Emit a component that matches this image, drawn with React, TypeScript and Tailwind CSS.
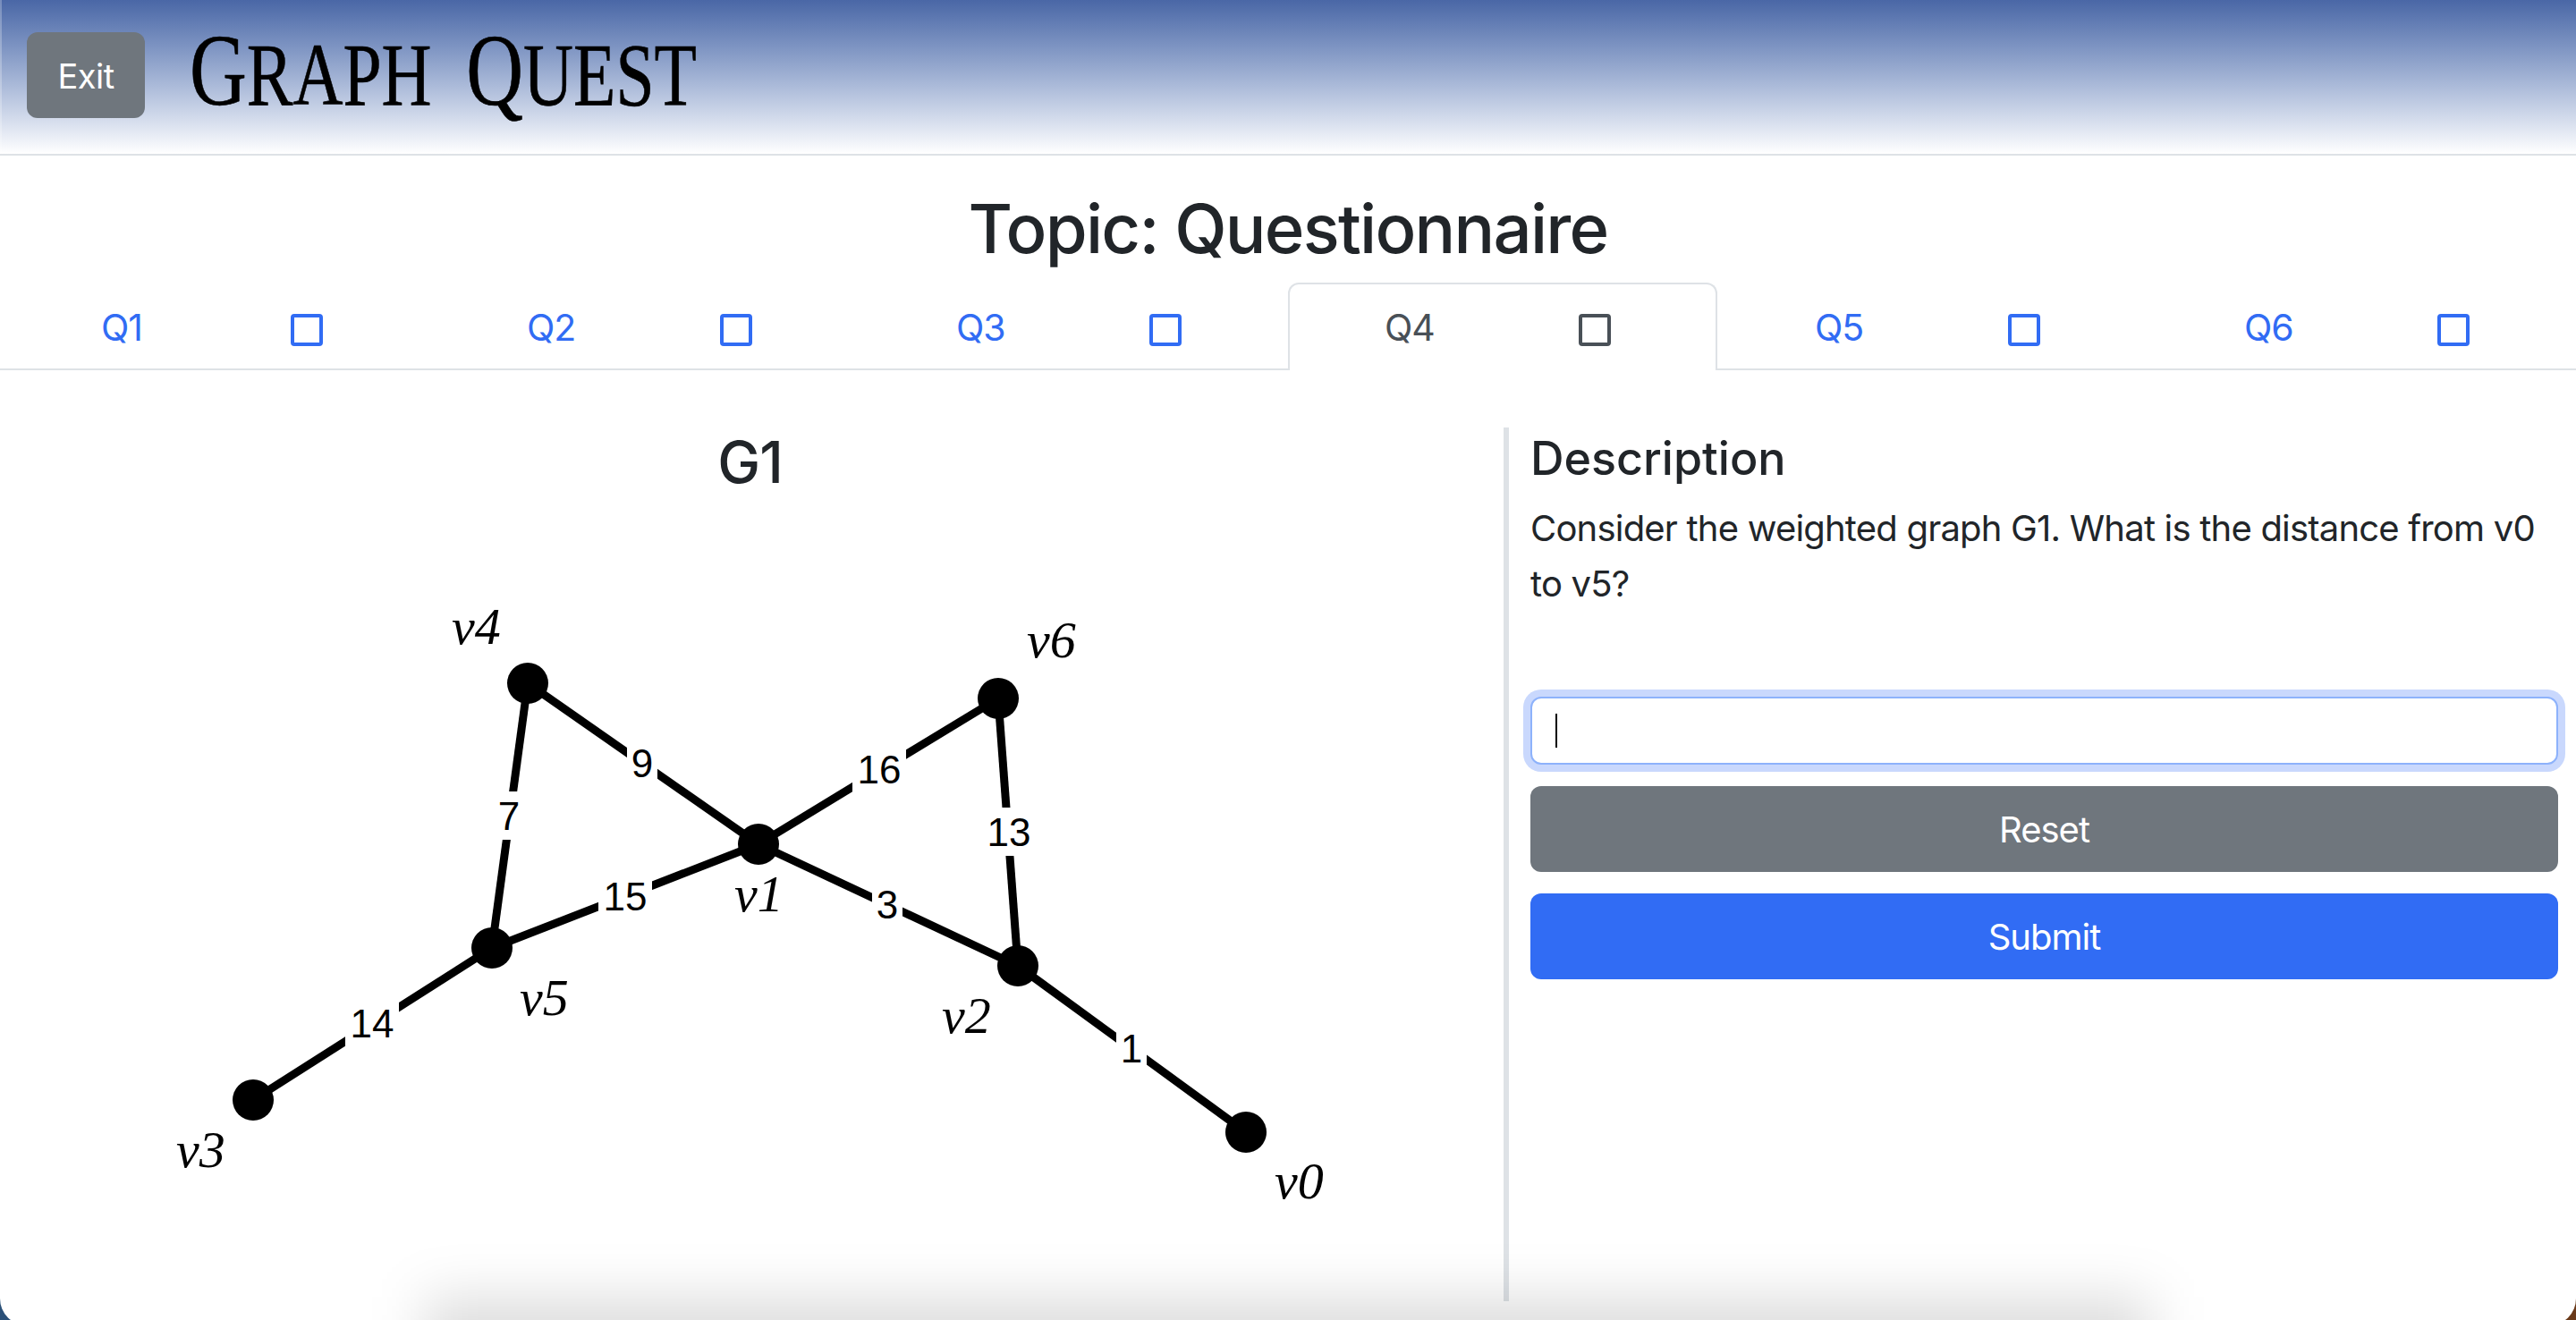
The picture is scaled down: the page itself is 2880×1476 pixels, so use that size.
const tabs = ['Q1', 'Q2', 'Q3', 'Q4', 'Q5', 'Q6']

const edges = [
  [590, 764, 848, 944],
  [590, 764, 550, 1060],
  [550, 1060, 848, 944],
  [550, 1060, 283, 1230],
  [848, 944, 1116, 781],
  [848, 944, 1138, 1080],
  [1116, 781, 1138, 1080],
  [1138, 1080, 1393, 1266],
]

const nodes = [
  [590, 764],
  [550, 1060],
  [283, 1230],
  [848, 944],
  [1116, 781],
  [1138, 1080],
  [1393, 1266],
]

const weights: [string, number, number][] = [
  ['9', 718, 853],
  ['7', 569, 912],
  ['15', 699, 1002],
  ['14', 416, 1144],
  ['16', 983, 860],
  ['13', 1128, 930],
  ['3', 992, 1011],
  ['1', 1265, 1172],
]

const names: [string, number, number][] = [
  ['v4', 505, 720],
  ['v5', 581, 1135],
  ['v3', 197, 1305],
  ['v1', 821, 1019],
  ['v6', 1148, 735],
  ['v2', 1053, 1155],
  ['v0', 1425, 1340],
]

function Graph() {
  return (
    <svg width="1680" height="800" viewBox="0 600 1680 800" className="block">
      {edges.map((e, i) => (
        <line key={i} x1={e[0]} y1={e[1]} x2={e[2]} y2={e[3]} stroke="#000" strokeWidth="9" />
      ))}
      {weights.map(([t, x, y]) => (
        <g key={t}>
          <rect x={x - (t.length > 1 ? 30 : 17)} y={y - 27} width={t.length > 1 ? 60 : 34} height="54" fill="#fff" />
          <text x={x} y={y + 16} textAnchor="middle" fontSize="44" fontFamily="'Liberation Sans', sans-serif" fill="#000">
            {t}
          </text>
        </g>
      ))}
      {nodes.map((n, i) => (
        <circle key={i} cx={n[0]} cy={n[1]} r="23" fill="#000" />
      ))}
      {names.map(([t, x, y]) => (
        <text key={t} x={x} y={y} fontSize="58" fontStyle="italic" fontFamily="'Liberation Serif', serif" fill="#000">
          {t}
        </text>
      ))}
    </svg>
  )
}

function tabLabelClass(t: string) {
  if (t === 'Q1') return 'ml-[113px] mt-[-8px] w-[212px] text-[41px] leading-[46px] tracking-[-1px]'
  if (t === 'Q4') return 'ml-[106px] mt-[-8px] w-[217px] text-[41px] leading-[46px] tracking-[-1px]'
  return 'ml-[109px] mt-[-8px] w-[216px] text-[41px] leading-[46px] tracking-[-1px]'
}

export default function App() {
  return (
    <div className="h-[1476px] overflow-hidden bg-[linear-gradient(to_right,#2b5078_50%,#6b3a1a_50%)]">
      <div className="relative h-[1482px] overflow-hidden rounded-b-[30px] bg-white font-['Inter',sans-serif] text-[40px] leading-[1.5] text-[#212529]">
        <header className="relative flex h-[174px] items-start border-b-2 border-[#dee2e6] bg-gradient-to-b from-[#4a67a6] to-white pl-[30px] pt-[36px]">
          <button className="h-[96px] w-[132px] rounded-[12px] bg-[#6f767d] pt-[2px] text-[38px] tracking-[-0.5px] text-white">Exit</button>
          <div className="ml-[50px] mt-[-22px] origin-left scale-x-[0.775] whitespace-pre font-['Liberation_Serif',serif] text-[100px] leading-[130px] text-black [-webkit-text-stroke:0.6px_#000]">
            <span className="text-[114px]">G</span>RAPH  <span className="text-[114px]">Q</span>UEST
          </div>
          <div className="absolute bottom-0 left-0 top-0 w-[2px] bg-white/25" />
        </header>

        <h1 className="mt-[36px] h-[90px] text-center text-[76px] leading-[90px] font-medium tracking-[-1.75px]">Topic: Questionnaire</h1>

        <nav className="mt-[16px] flex h-[98px] border-b-2 border-[#dee2e6]">
          {tabs.map((t) => {
            const active = t === 'Q4'
            return (
              <div
                key={t}
                className={
                  active
                    ? 'relative mb-[-2px] flex h-[98px] w-[480px] rounded-t-[12px] border-2 border-b-0 border-[#dee2e6] bg-white pt-[33px] text-[#495057]'
                    : 'flex h-[96px] w-[480px] pt-[35px] text-[#316cf4]'
                }
              >
                <span className={tabLabelClass(t)}>{t}</span>
                <span className={active ? 'h-[36px] w-[36px] rounded-[4px] border-[4px] border-[#495057]' : 'h-[36px] w-[36px] rounded-[4px] border-[4px] border-[#316cf4]'} />
              </div>
            )
          })}
        </nav>

        <main className="mt-[64px] flex h-[977px]">
          <section className="w-[1681px]">
            <h2 className="mt-[-3px] h-[125px] pr-[4px] text-center text-[64px] leading-[84px] font-medium tracking-[-1px]">G1</h2>
            <Graph />
          </section>
          <section className="h-[977px] w-[1199px] border-l-[6px] border-[#dee2e6] pl-[24px] pr-[20px]">
            <h3 className="mt-[4px] text-[52px] leading-[62px] font-medium">Description</h3>
            <p className="mt-[16px] h-[219px] leading-[62px] tracking-[-0.8px]">
              Consider the weighted graph G1. What is the distance from v0 to v5?
            </p>
            <div className="flex h-[76px] items-center rounded-[12px] border-2 border-[#8db2fb] bg-white pl-[26px] shadow-[0_0_0_8px_#c9d8fd]">
              <span className="h-[38px] w-[2px] bg-black" />
            </div>
            <button className="mt-[24px] h-[96px] w-full rounded-[12px] bg-[#6f767d] pt-[2px] tracking-[-1px] text-white">Reset</button>
            <button className="mt-[24px] h-[96px] w-full rounded-[12px] bg-[#316cf4] pt-[2px] tracking-[-1px] text-white">Submit</button>
          </section>
        </main>

        <div className="absolute bottom-[-94px] left-[475px] right-[475px] h-[126px] bg-black/[0.135] blur-[30px]" />
      </div>
    </div>
  )
}
